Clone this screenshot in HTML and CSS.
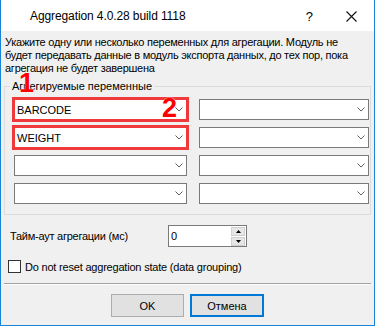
FILE: index.html
```html
<!DOCTYPE html>
<html lang="ru">
<head>
<meta charset="utf-8">
<title>Aggregation</title>
<link rel="stylesheet" href="styles.css">
</head>
<body>
<div class="window">
  <div class="titlebar">
    <span class="title">Aggregation 4.0.28 build 1118</span>
    <span class="help">?</span>
    <span class="close"><svg width="11" height="11" viewBox="0 0 11 11"><path d="M0.5 0.5 L10.5 10.5 M10.5 0.5 L0.5 10.5" stroke="#111" stroke-width="1.1" fill="none"/></svg></span>
  </div>
  <div class="content">
    <p class="desc">Укажите одну или несколько переменных для агрегации. Модуль не<br>будет передавать данные в модуль экспорта данных, до тех пор, пока<br>агрегация не будет завершена</p>
    <fieldset class="group">
      <legend class="legend">Агрегируемые переменные</legend>
      <div class="grid">
        <div class="combo hl"><span class="val">BARCODE</span><svg class="chev" width="8" height="5" viewBox="0 0 8 5"><polyline points="0.5,0.5 4,4 7.5,0.5" stroke="#606060" fill="none"/></svg></div>
        <div class="combo"><span class="val"></span><svg class="chev" width="8" height="5" viewBox="0 0 8 5"><polyline points="0.5,0.5 4,4 7.5,0.5" stroke="#606060" fill="none"/></svg></div>
        <div class="combo hl"><span class="val">WEIGHT</span><svg class="chev" width="8" height="5" viewBox="0 0 8 5"><polyline points="0.5,0.5 4,4 7.5,0.5" stroke="#606060" fill="none"/></svg></div>
        <div class="combo"><span class="val"></span><svg class="chev" width="8" height="5" viewBox="0 0 8 5"><polyline points="0.5,0.5 4,4 7.5,0.5" stroke="#606060" fill="none"/></svg></div>
        <div class="combo"><span class="val"></span><svg class="chev" width="8" height="5" viewBox="0 0 8 5"><polyline points="0.5,0.5 4,4 7.5,0.5" stroke="#606060" fill="none"/></svg></div>
        <div class="combo"><span class="val"></span><svg class="chev" width="8" height="5" viewBox="0 0 8 5"><polyline points="0.5,0.5 4,4 7.5,0.5" stroke="#606060" fill="none"/></svg></div>
        <div class="combo"><span class="val"></span><svg class="chev" width="8" height="5" viewBox="0 0 8 5"><polyline points="0.5,0.5 4,4 7.5,0.5" stroke="#606060" fill="none"/></svg></div>
        <div class="combo"><span class="val"></span><svg class="chev" width="8" height="5" viewBox="0 0 8 5"><polyline points="0.5,0.5 4,4 7.5,0.5" stroke="#606060" fill="none"/></svg></div>
      </div>
    </fieldset>
    <div class="timeout">
      <span class="tlabel">Тайм-аут агрегации (мс)</span>
      <div class="spin">
        <span class="sval">0</span>
        <div class="sbtns">
          <span class="sbtn"><svg width="5" height="3" viewBox="0 0 5 3"><polygon points="2.5,0 5,3 0,3" fill="#000"/></svg></span>
          <span class="sbtn"><svg width="5" height="3" viewBox="0 0 5 3"><polygon points="0,0 5,0 2.5,3" fill="#000"/></svg></span>
        </div>
      </div>
    </div>
    <div class="check"><span class="box"></span><span class="clabel">Do not reset aggregation state (data grouping)</span></div>
    <div class="sep"></div>
    <div class="buttons">
      <span class="btn">OK</span>
      <span class="btn default">Отмена</span>
    </div>
  </div>
  <span class="marker m1">1</span>
  <span class="marker m2">2</span>
</div>
</body>
</html>
```
FILE: styles.css
```css
html, body {
  margin: 0;
  padding: 0;
  background: #f0f0f0;
}
.window {
  position: relative;
  width: 375px;
  height: 326px;
  box-sizing: border-box;
  border: 1px solid #1883d7;
  border-top: none;
  background: #f0f0f0;
  font-family: "Liberation Sans", Arial, sans-serif;
  font-size: 11px;
  color: #000;
  display: flex;
  flex-direction: column;
  overflow: hidden;
}
.titlebar {
  height: 31px;
  flex: none;
  background: #fff;
  display: flex;
  align-items: center;
  font-size: 12px;
}
.title {
  margin-left: 29px;
  flex: 1;
  padding-top: 1px;
  letter-spacing: -0.1px;
}
.help {
  font-size: 13px;
  margin-right: 33px;
  padding-top: 1px;
}
.close {
  display: flex;
  margin-right: 17px;
  margin-top: 1px;
}
.content {
  flex: 1;
  padding: 0 3px 0 3px;
  display: flex;
  flex-direction: column;
}
.desc {
  margin: 5px 0 0 1px;
  line-height: 13px;
  letter-spacing: -0.25px;
}
.group {
  margin: 5px 0 0 0;
  padding: 6px 1px 10px 9px;
  border: 1px solid #dcdcdc;
  min-width: 0;
}
.legend {
  padding: 0 2px;
  margin-left: -4px;
  line-height: 13px;
  color: #000;
}
.grid {
  display: grid;
  grid-template-columns: 173px 170px;
  column-gap: 12px;
  row-gap: 7px;
}
.combo {
  height: 21px;
  box-sizing: border-box;
  border: 1px solid #7a7a7a;
  background: #fff;
  display: flex;
  align-items: center;
  padding: 0 3px 0 2px;
}
.combo.hl {
  outline: 3px solid #f0393b;
  outline-offset: -1px;
}
.val {
  flex: 1;
}
.chev {
  display: block;
}
.timeout {
  display: flex;
  align-items: center;
  margin-top: 10px;
}
.tlabel {
  width: 158px;
  margin-left: 6px;
  letter-spacing: -0.25px;
}
.spin {
  width: 79px;
  height: 22px;
  box-sizing: border-box;
  border: 1px solid #7a7a7a;
  background: #fff;
  display: flex;
  align-items: center;
  padding: 0 1px 0 2px;
}
.sval {
  flex: 1;
}
.sbtns {
  display: flex;
  flex-direction: column;
  gap: 1px;
}
.sbtn {
  width: 14px;
  height: 9px;
  box-sizing: border-box;
  background: #e6e6e6;
  border: 1px solid #d0d0d0;
  display: flex;
  align-items: center;
  justify-content: center;
}
.sbtn svg {
  display: block;
}
.check {
  display: flex;
  align-items: center;
  margin: 13px 0 0 4px;
}
.box {
  width: 13px;
  height: 13px;
  box-sizing: border-box;
  border: 1px solid #333;
  background: #fff;
  margin-right: 4px;
}
.clabel {
  letter-spacing: -0.2px;
}
.sep {
  margin-top: 10px;
  height: 1px;
  background: #a0a0a0;
  border-bottom: 1px solid #fff;
}
.buttons {
  display: flex;
  justify-content: center;
  gap: 6px;
  margin-top: 9px;
}
.btn {
  width: 73px;
  height: 23px;
  box-sizing: border-box;
  border: 1px solid #adadad;
  background: #e1e1e1;
  display: flex;
  align-items: center;
  justify-content: center;
}
.btn.default {
  border: 2px solid #0078d7;
  width: 74px;
}
.marker {
  position: absolute;
  font-family: "Liberation Sans", Arial, sans-serif;
  font-weight: bold;
  font-size: 27px;
  line-height: 27px;
  color: #ff0000;
  text-shadow: 0 0 1px #fff, 0 0 1px #fff;
}
.m1 {
  left: 18px;
  top: 70px;
}
.m2 {
  left: 161px;
  top: 95px;
}
```
